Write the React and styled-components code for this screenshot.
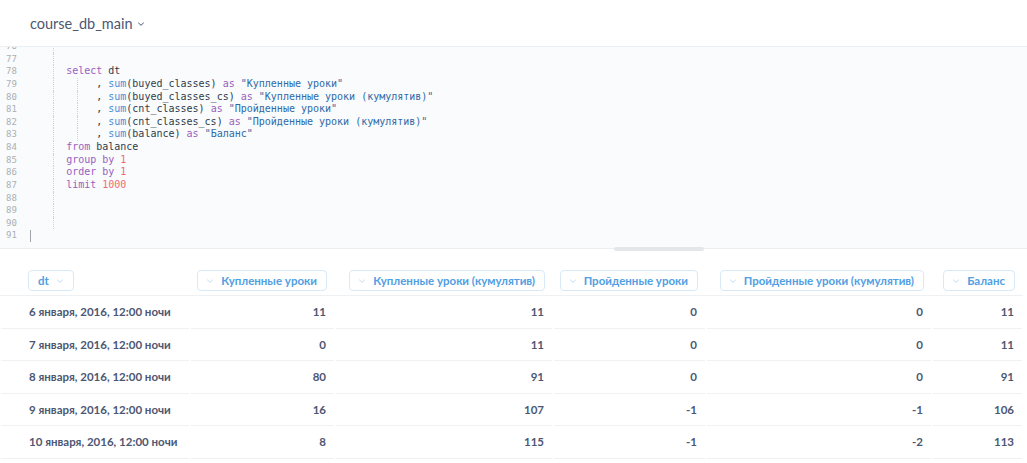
import React from "react";
import styled, { createGlobalStyle } from "styled-components";

const GlobalStyle = createGlobalStyle`
  html, body {
    margin: 0;
    padding: 0;
    background: #ffffff;
  }
  body {
    font-family: Lato, "Noto Sans", sans-serif;
    color: #4c5773;
  }
`;

const Page = styled.div`
  display: flex;
  flex-direction: column;
  width: 1027px;
  height: 463px;
  overflow: hidden;
`;

const TopBar = styled.div`
  display: flex;
  align-items: center;
  height: 46px;
  padding-left: 30px;
  border-bottom: 1px solid #eceff1;
  background: #ffffff;
`;

const DbName = styled.div`
  display: flex;
  align-items: center;
  gap: 4px;
  font-size: 14.5px;
  color: #4c5773;
  padding-top: 1px;
`;

const Editor = styled.div`
  position: relative;
  height: 201px;
  background: #f9fbfc;
  border-bottom: 1px solid #eceff1;
`;

const CodeClip = styled.div`
  height: 100%;
  overflow: hidden;
`;

const CodeScroll = styled.div`
  margin-top: -7px;
  font-family: "DejaVu Sans Mono", "Liberation Mono", monospace;
`;

const Line = styled.div`
  display: flex;
  align-items: stretch;
  height: 12.64px;
  line-height: 12.64px;
`;

const Gutter = styled.div`
  width: 24px;
  padding-left: 6px;
  font-size: 9px;
  color: #abb0b5;
  flex-shrink: 0;
`;

const Guide = styled.span`
  display: block;
  width: 24.08px;
  flex-shrink: 0;
  box-sizing: border-box;
  border-right: 1px dotted #cfd3d6;
`;

const Text = styled.span`
  white-space: pre;
  font-size: 10px;
  color: #2f3c4d;
`;

const Tok = styled.span`
  color: ${(p) =>
    p.$t === "kw"
      ? "#9a5fbf"
      : p.$t === "fn"
      ? "#4a8fd8"
      : p.$t === "str"
      ? "#2f6aa8"
      : p.$t === "num"
      ? "#ef6b73"
      : "#2f3c4d"};
`;

const Cursor = styled.span`
  display: block;
  width: 1px;
  height: 12px;
  margin-top: 1px;
  background: #a0a4a8;
`;

const Handle = styled.div`
  position: absolute;
  left: 614px;
  bottom: -3px;
  width: 90px;
  height: 4px;
  border-radius: 2px;
  background: #e4e6e8;
`;

const Table = styled.div`
  display: grid;
  grid-template-columns: 190px 145px 218px 153px 226px 91px;
  width: 1023px;
`;

const HeadCell = styled.div`
  display: flex;
  justify-content: ${(p) => (p.$left ? "flex-start" : "flex-end")};
  padding: 21px 8px 4px ${(p) => (p.$left ? "28px" : "8px")};
  border-bottom: 1px solid #eef0f2;
`;

const Chip = styled.div`
  display: flex;
  align-items: center;
  gap: 7px;
  height: 19px;
  padding: 0 9px 0 ${(p) => (p.$left ? "9px" : "8px")};
  border: 1px solid #d8e9f8;
  border-radius: 4px;
  font-size: 11.5px;
  font-weight: 700;
  color: #509ee3;
  white-space: nowrap;
`;

const Cell = styled.div`
  display: flex;
  align-items: center;
  justify-content: ${(p) => (p.$left ? "flex-start" : "flex-end")};
  height: 31.5px;
  padding: 0 8px 0 ${(p) => (p.$left ? "28px" : "8px")};
  margin: 0 1px;
  border-bottom: 1px solid #f0f1f3;
  font-size: 11.5px;
  font-weight: 700;
  color: #4c5773;
  white-space: nowrap;
`;

const Chevron = ({ color, size = 6 }) => (
  <svg width={size + 2} height={size} viewBox="0 0 8 6" fill="none">
    <path d="M1.5 2 L4 4.3 L6.5 2" stroke={color} strokeWidth="1" strokeLinecap="round" strokeLinejoin="round" />
  </svg>
);

const code = [
  { n: 76, g: 1, t: [] },
  { n: 77, g: 1, t: [] },
  { n: 78, g: 1, t: [["", "  "], ["kw", "select"], ["", " dt"]] },
  { n: 79, g: 2, t: [["", "   , "], ["fn", "sum"], ["", "(buyed_classes) "], ["kw", "as"], ["", " "], ["str", '"Купленные уроки"']] },
  { n: 80, g: 2, t: [["", "   , "], ["fn", "sum"], ["", "(buyed_classes_cs) "], ["kw", "as"], ["", " "], ["str", '"Купленные уроки (кумулятив)"']] },
  { n: 81, g: 2, t: [["", "   , "], ["fn", "sum"], ["", "(cnt_classes) "], ["kw", "as"], ["", " "], ["str", '"Пройденные уроки"']] },
  { n: 82, g: 2, t: [["", "   , "], ["fn", "sum"], ["", "(cnt_classes_cs) "], ["kw", "as"], ["", " "], ["str", '"Пройденные уроки (кумулятив)"']] },
  { n: 83, g: 2, t: [["", "   , "], ["fn", "sum"], ["", "(balance) "], ["kw", "as"], ["", " "], ["str", '"Баланс"']] },
  { n: 84, g: 1, t: [["", "  "], ["kw", "from"], ["", " balance"]] },
  { n: 85, g: 1, t: [["", "  "], ["kw", "group by"], ["", " "], ["num", "1"]] },
  { n: 86, g: 1, t: [["", "  "], ["kw", "order by"], ["", " "], ["num", "1"]] },
  { n: 87, g: 1, t: [["", "  "], ["kw", "limit"], ["", " "], ["num", "1000"]] },
  { n: 88, g: 1, t: [] },
  { n: 89, g: 1, t: [] },
  { n: 90, g: 1, t: [] },
  { n: 91, g: 0, t: [], cursor: true },
];

const columns = [
  { name: "dt", left: true },
  { name: "Купленные уроки" },
  { name: "Купленные уроки (кумулятив)" },
  { name: "Пройденные уроки" },
  { name: "Пройденные уроки (кумулятив)" },
  { name: "Баланс" },
];

const rows = [
  ["6 января, 2016, 12:00 ночи", 11, 11, 0, 0, 11],
  ["7 января, 2016, 12:00 ночи", 0, 11, 0, 0, 11],
  ["8 января, 2016, 12:00 ночи", 80, 91, 0, 0, 91],
  ["9 января, 2016, 12:00 ночи", 16, 107, -1, -1, 106],
  ["10 января, 2016, 12:00 ночи", 8, 115, -1, -2, 113],
];

export default function App() {
  return (
    <Page>
      <GlobalStyle />
      <TopBar>
        <DbName>
          course_db_main
          <Chevron color="#4c5773" />
        </DbName>
      </TopBar>

      <Editor>
        <CodeClip>
          <CodeScroll>
            {code.map((line) => (
              <Line key={line.n}>
                <Gutter>{line.n}</Gutter>
                {Array.from({ length: line.g }).map((_, i) => (
                  <Guide key={i} />
                ))}
                {line.cursor && <Cursor />}
                <Text>
                  {line.t.map(([type, text], i) => (
                    <Tok key={i} $t={type}>
                      {text}
                    </Tok>
                  ))}
                </Text>
              </Line>
            ))}
          </CodeScroll>
        </CodeClip>
        <Handle />
      </Editor>

      <Table>
        {columns.map((col) => (
          <HeadCell key={col.name} $left={col.left}>
            <Chip $left={col.left}>
              {!col.left && <Chevron color="#c4daf0" />}
              {col.name}
              {col.left && <Chevron color="#c4daf0" />}
            </Chip>
          </HeadCell>
        ))}
        {rows.map((row) =>
          row.map((value, i) => (
            <Cell key={row[0] + i} $left={i === 0}>
              {value}
            </Cell>
          ))
        )}
      </Table>
    </Page>
  );
}
